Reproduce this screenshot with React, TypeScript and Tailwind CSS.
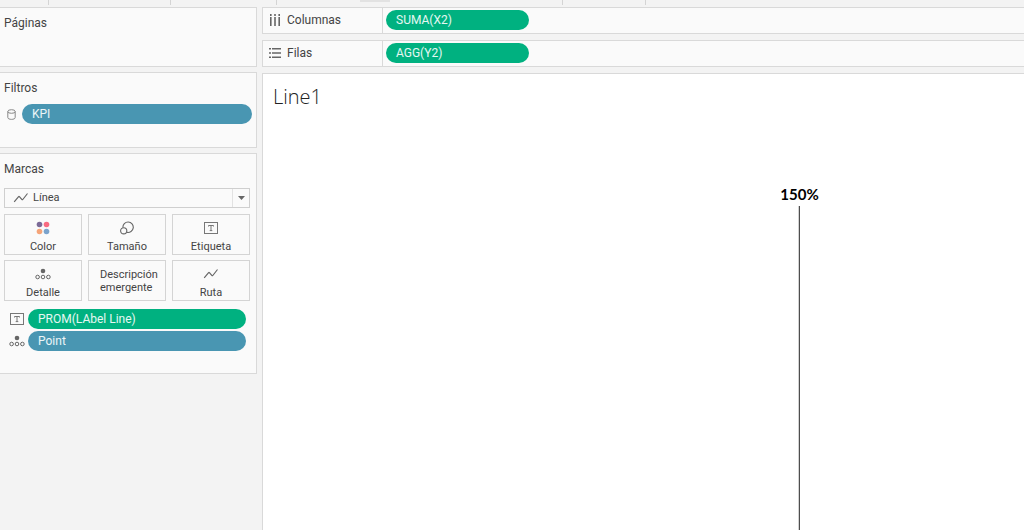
import type { ReactNode } from 'react';
import { clsx } from 'clsx';

type PillColor = 'green' | 'blue';

interface PillProps {
  label: string;
  color: PillColor;
  className?: string;
}

function Pill({ label, color, className }: PillProps) {
  return (
    <button
      type="button"
      className={clsx(
        'h-5 rounded-full px-[10px] text-left text-[12px] leading-5 text-white/90',
        color === 'green' ? 'bg-[#00b180]' : 'bg-[#4996b2]',
        className
      )}
    >
      {label}
    </button>
  );
}

function LineIcon() {
  return (
    <svg width="16" height="12" viewBox="0 0 16 12" fill="none" stroke="#666" strokeWidth="1.2" aria-hidden="true">
      <path d="M1.2 9.8 5.6 4.6Q6 4.2 6.4 4.6L9 7.6Q9.4 8 9.8 7.5L14.5 1.5" />
    </svg>
  );
}

function ColorIcon() {
  return (
    <svg width="14" height="14" viewBox="0 0 14 14" aria-hidden="true">
      <circle cx="3.5" cy="3.5" r="2.8" fill="#7b6a97" />
      <circle cx="10.5" cy="3.5" r="2.8" fill="#f96b81" />
      <circle cx="3.5" cy="10.5" r="2.8" fill="#f5a478" />
      <circle cx="10.5" cy="10.5" r="2.8" fill="#7ba3cc" />
    </svg>
  );
}

function SizeIcon() {
  return (
    <svg width="14" height="14" viewBox="0 0 14 14" fill="none" stroke="#666" strokeWidth="1.1" aria-hidden="true">
      <path d="M2.9 6.6A5.2 5.2 0 1 1 6.9 11.3" />
      <circle cx="3.7" cy="9.8" r="3.1" />
    </svg>
  );
}

function LabelIcon() {
  return (
    <svg width="14" height="12" viewBox="0 0 14 12" fill="none" stroke="#777" aria-hidden="true">
      <rect x="0.5" y="0.5" width="13" height="11" />
      <path d="M4.5 4.5V3.5H9.5V4.5M7 3.5V8.5M5.7 8.6H8.3" />
    </svg>
  );
}

function DetailIcon() {
  return (
    <svg width="16" height="12" viewBox="0 0 16 12" fill="none" stroke="#666" aria-hidden="true">
      <circle cx="8" cy="3" r="2.3" fill="#666" stroke="none" />
      <circle cx="2.6" cy="9" r="1.8" />
      <circle cx="8" cy="9" r="1.8" />
      <circle cx="13.4" cy="9" r="1.8" />
    </svg>
  );
}

function DataSourceIcon() {
  return (
    <svg width="9" height="11" viewBox="0 0 9 11" fill="none" stroke="#888" aria-hidden="true">
      <ellipse cx="4.5" cy="2.5" rx="3.7" ry="1.8" />
      <path d="M0.8 2.5V8.5C0.8 11 8.2 11 8.2 8.5V2.5" />
    </svg>
  );
}

function ColumnsIcon() {
  return (
    <svg width="12" height="12" viewBox="0 0 12 12" fill="#666" aria-hidden="true">
      <path d="M1 0h1.6v2H1zM5.2 0h1.6v2H5.2zM9.4 0h1.6v2H9.4zM1 3h1.6v9H1zM5.2 3h1.6v9H5.2zM9.4 3h1.6v9H9.4z" />
    </svg>
  );
}

function RowsIcon() {
  return (
    <svg width="12" height="10" viewBox="0 0 12 10" fill="#666" aria-hidden="true">
      <path d="M0 0h2v1.6H0zM0 4.2h2v1.6H0zM0 8.4h2V10H0zM3 0h9v1.6H3zM3 4.2h9v1.6H3zM3 8.4h9V10H3z" />
    </svg>
  );
}

function Card({ title, className, children }: { title: string; className?: string; children?: ReactNode }) {
  return (
    <section className={clsx('border border-l-0 border-[#d9d9d9] bg-[#fafafa] pt-[5px] pl-1', className)}>
      <h2 className="text-[12px] leading-5">{title}</h2>
      {children}
    </section>
  );
}

function Shelf({ icon, label, children }: { icon: ReactNode; label: string; children: ReactNode }) {
  return (
    <div className="flex h-[27px] border border-r-0 border-[#d9d9d9] bg-[#fafafa]">
      <div className="flex w-[120px] shrink-0 items-start gap-[6px] border-r border-[#d9d9d9] pt-[2px] pl-[6px] text-[12px] leading-5">
        <span className="flex h-5 items-center">{icon}</span>
        <span>{label}</span>
      </div>
      <div className="flex flex-1 items-start pt-[2px] pl-[3px]">{children}</div>
    </div>
  );
}

const markButtons = [
  { label: 'Color', icon: <ColorIcon /> },
  { label: 'Tamaño', icon: <SizeIcon /> },
  { label: 'Etiqueta', icon: <LabelIcon /> },
  { label: 'Detalle', icon: <DetailIcon /> },
  { label: 'Descripción emergente', icon: null },
  { label: 'Ruta', icon: <LineIcon /> },
];

function Sidebar() {
  return (
    <aside className="flex w-[257px] shrink-0 flex-col gap-[5px]">
      <Card title="Páginas" className="h-[60px]" />

      <Card title="Filtros" className="h-[76px]">
        <div className="mt-[6px] flex items-center gap-[6px] pr-1 pl-[3px]">
          <DataSourceIcon />
          <Pill label="KPI" color="blue" className="flex-1" />
        </div>
      </Card>

      <Card title="Marcas" className="pr-[6px] pb-[22px]">
        <div className="relative mt-[9px] text-[11px]">
          <select
            aria-label="Tipo de marca"
            className="block h-5 w-full appearance-none border border-[#cfcfcf] bg-[#fafafa] pl-7"
          >
            <option>Línea</option>
          </select>
          <span className="pointer-events-none absolute inset-y-0 left-[9px] flex items-center">
            <LineIcon />
          </span>
          <span className="pointer-events-none absolute inset-y-px right-px flex w-[17px] items-center justify-center border-l border-[#e2e2e2]">
            <svg width="7" height="4" viewBox="0 0 7 4" fill="#666" aria-hidden="true">
              <path d="M0 0h7L3.5 4z" />
            </svg>
          </span>
        </div>

        <div className="mt-[6px] grid grid-cols-3 gap-x-[6px] gap-y-[5px] text-[11px]">
          {markButtons.map(({ label, icon }) => (
            <button
              key={label}
              type="button"
              className="flex h-[41px] flex-col items-center justify-center border border-[#d4d4d4]"
            >
              {icon ? (
                <>
                  <span className="flex h-5 items-center pt-[5px]">{icon}</span>
                  <span className="pt-[5px] leading-[14px]">{label}</span>
                </>
              ) : (
                <span className="w-[54px] text-left leading-[13px]">{label}</span>
              )}
            </button>
          ))}
        </div>

        <div className="mt-2 flex flex-col gap-[2px] pr-1">
          <div className="flex items-center">
            <span className="flex w-6 justify-center pl-[2px]">
              <LabelIcon />
            </span>
            <Pill label="PROM(LAbel Line)" color="green" className="flex-1" />
          </div>
          <div className="flex items-center">
            <span className="flex w-6 justify-center pl-[2px]">
              <DetailIcon />
            </span>
            <Pill label="Point" color="blue" className="flex-1" />
          </div>
        </div>
      </Card>
    </aside>
  );
}

function Worksheet() {
  return (
    <section className="flex flex-1 flex-col border border-r-0 border-b-0 border-[#d9d9d9] bg-white">
      <h1 className="pt-[9px] pl-[10px] font-['Open_Sans'] text-[20px] leading-7 font-light text-[#222]">Line1</h1>
      <div className="relative flex-1">
        <div className="absolute top-[73px] bottom-0 left-[70.5%] flex -translate-x-1/2 flex-col items-center text-black">
          <span className="font-['Lato'] text-[15px] leading-5 font-bold">150%</span>
          <span className="mt-[2px] w-px flex-1 bg-[#222]" />
        </div>
      </div>
    </section>
  );
}

export default function App() {
  return (
    <div className="flex min-h-screen flex-col bg-[#f3f3f3] font-['Roboto',sans-serif] text-[#444]">
      {/* bottom edge of the toolbar */}
      <div className="flex h-[5px]">
        <span className="w-[49px] border-r border-[#d4d4d4]" />
        <span className="w-[122px] border-r border-[#d4d4d4]" />
        <span className="w-[106px] border-r border-[#d4d4d4]" />
        <span className="ml-[83px] h-[2px] w-[30px] bg-[#e2e2e2]" />
        <span className="w-[173px] border-r border-[#d4d4d4]" />
        <span className="w-[83px] border-r border-[#d4d4d4]" />
      </div>

      <div className="flex flex-1 gap-[5px] pt-[2px]">
        <Sidebar />
        <main className="flex min-w-0 flex-1 flex-col gap-[6px]">
          <Shelf icon={<ColumnsIcon />} label="Columnas">
            <Pill label="SUMA(X2)" color="green" className="w-[143px]" />
          </Shelf>
          <Shelf icon={<RowsIcon />} label="Filas">
            <Pill label="AGG(Y2)" color="green" className="w-[143px]" />
          </Shelf>
          <Worksheet />
        </main>
      </div>
    </div>
  );
}
